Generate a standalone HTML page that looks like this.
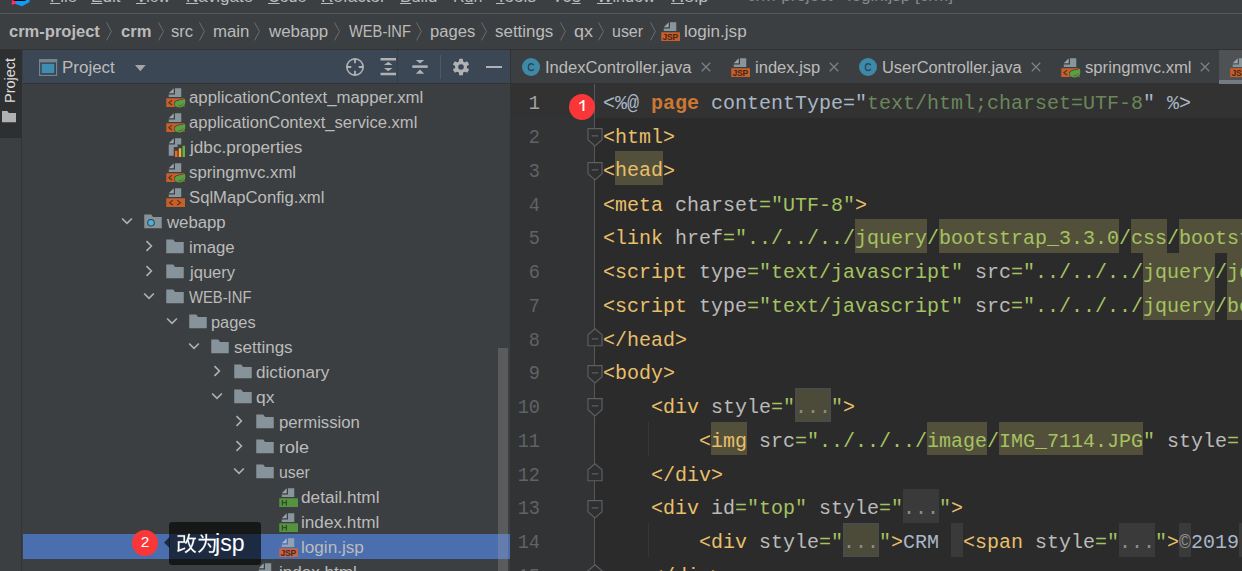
<!DOCTYPE html>
<html lang="en"><head><meta charset="utf-8"><title>crm-project - login.jsp [crm]</title>
<style>
html,body{margin:0;padding:0;background:#3c3f41;overflow:hidden}
body{width:1242px;height:571px;position:relative;font-family:"Liberation Sans",sans-serif;font-size:16px;color:#bbbbbb;line-height:25px}
div,span,svg{position:absolute;white-space:pre}
.t{height:25px;line-height:25px;transform-origin:0 50%}
.b{font-weight:bold}
svg{overflow:visible}
.ic{width:20px;height:20px}
#editor{left:510px;top:83px;width:732px;height:488px;background:#2b2b2b;overflow:hidden}
#gutter{left:0;top:0;width:84.5px;height:488px;background:#313335}
.ln{font-family:"Liberation Mono",monospace;font-size:20px;color:#606366;height:33.77px;line-height:33.77px;text-align:right;width:60px;left:-30px;margin-top:2.9px;transform:scale(.93,1.04);transform-origin:100% 66.3%}
.cl{font-family:"Liberation Mono",monospace;font-size:20px;letter-spacing:-0.002px;color:#a9b7c6;height:33.77px;line-height:33.77px;left:93.1px;margin-top:2.9px}
.cl span{position:static}
.tg{color:#e8bf6a}.an{color:#bababa}.av{color:#a5c261}.kw{color:#cc7832;font-weight:bold}.ds{color:#6a8759}
.hl{background:#52503a;padding:8.3px 0 2.5px}
.fd{color:#8c8c8c;background:#3a3a3a;padding:8.3px 0 2.5px}
.fo{color:#8c8c8c;background:#4c4a38;padding:8.3px 0 2.5px;box-shadow:inset 0 0 0 1.5px #484c4f}
</style></head>
<body>
<svg width="0" height="0" style="left:-10px;top:-10px"><defs>
<symbol id="folder" viewBox="0 0 16 16"><path d="M1 2h5.6L8 4h7v9H1z" fill="#87939a"></path></symbol>
<symbol id="wfolder" viewBox="0 0 16 16"><path d="M1 2h5.6L8 4h7v9H1z" fill="#87939a"></path><circle cx="6.400" cy="8.600" r="3.050" fill="#3c3f41"></circle><circle cx="6.400" cy="8.600" r="2.250" fill="#40b6e0"></circle></symbol>
<symbol id="page" viewBox="0 0 16 16"><path d="M7 1L3 5h4z" fill="#99a4ab"></path><path d="M8 1h5v7H3V6h5z" fill="#89959c"></path></symbol>
<symbol id="leaf" viewBox="0 0 16 16" overflow="visible"><path d="M7.600 13.600C7.600 11.800 9.300 10.900 11.500 10.500 13.300 10.200 14.800 10.100 15.900 9.300 16.400 11 16.500 13 15.600 14.400 14.700 15.800 13.300 16.300 11.800 16.300 9.500 16.300 7.600 15.400 7.600 13.600z" fill="#5c9e46" stroke="#4a3a26" stroke-width=".9" paint-order="stroke"></path><path d="M10.700 15C12.400 15.300 14 14.600 14.700 13.200" fill="none" stroke="#3a6a2c" stroke-width=".7"></path></symbol>
<symbol id="xmls" viewBox="0 0 16 16" overflow="visible"><use href="#page"></use><path d="M1 9h14.800v7H1z" fill="#c5602c"></path><path d="M5.600 10.600L3.100 12.500l2.500 1.900" fill="none" stroke="#5b2c16" stroke-width=".85"></path><use href="#leaf"></use></symbol>
<symbol id="xml" viewBox="0 0 16 16"><use href="#page"></use><path d="M1 9h15v7H1z" fill="#c5602c"></path><path d="M6.200 10.600L3.700 12.500l2.500 1.900M9.800 10.600l2.500 1.900-2.500 1.900" fill="none" stroke="#5b2c16" stroke-width=".85"></path></symbol>
<symbol id="htm" viewBox="0 0 16 16"><use href="#page"></use><path d="M1 9h15v7H1z" fill="#559340"></path><path d="M3.500 10.300v4.400M6.700 10.300v4.400M3.500 12.500h3.200" fill="none" stroke="#2b4c24" stroke-width="1"></path></symbol>
<symbol id="jsp" viewBox="0 0 16 16"><use href="#page"></use><path d="M1 9h15v7H1z" fill="#c5602c"></path><text x="8.200" y="14.900" font-family="Liberation Sans, sans-serif" font-weight="bold" font-size="6.800" letter-spacing="-.2" text-anchor="middle" fill="#4a2414">JSP</text></symbol>
<symbol id="jspsel" viewBox="0 0 16 16"><path d="M7 1L3 5h4z" fill="#a9b5c4"></path><path d="M8 1h5v7H3V6h5z" fill="#93a1b5"></path><path d="M1 9h15v7H1z" fill="#c4664a"></path><text x="8.200" y="14.900" font-family="Liberation Sans, sans-serif" font-weight="bold" font-size="6.800" letter-spacing="-.2" text-anchor="middle" fill="#4a2420">JSP</text></symbol>
<symbol id="prop" viewBox="0 0 16 16"><path d="M7 1L3 5h4z" fill="#99a4ab"></path><path d="M8 1h5v5h-3v2H7v7H3V6h5z" fill="#89959c"></path><path d="M8 11h2v5H8z" fill="#f26522"></path><path d="M11 9h2v7h-2z" fill="#f4af3d"></path><path d="M14 7h2v9h-2z" fill="#62b543"></path></symbol>
<symbol id="cls" viewBox="0 0 16 16"><circle cx="8" cy="8" r="7.2" fill="#3f89a8"></circle><path d="M10.300 9.600c-.4.700-1.100 1.200-2 1.200-1.400 0-2.400-1.100-2.400-2.700s1-2.700 2.400-2.700c.9 0 1.500.4 1.900 1" fill="none" stroke="#27475a" stroke-width="1.100"></path></symbol>
<symbol id="adown" viewBox="0 0 16 16"><path d="M4.100 6L8 9.900l3.900-3.900" fill="none" stroke="#afb1b3" stroke-width="1.300"></path></symbol>
<symbol id="aright" viewBox="0 0 16 16"><path d="M6 4.100L9.900 8 6 11.900" fill="none" stroke="#afb1b3" stroke-width="1.300"></path></symbol>
<symbol id="close" viewBox="0 0 16 16"><path d="M4.600 4.600l6.800 6.800M11.400 4.600l-6.800 6.800" fill="none" stroke="#7f8284" stroke-width="1"></path></symbol>
<symbol id="fstart" viewBox="0 0 16 18.500"><path d="M1 .6h14v11.200L8 17.900 1 11.800z" fill="#2d2f30" stroke="#5c5e60" stroke-width="1.200"></path><path d="M4.700 7.800h6.600" stroke="#5c5e60" stroke-width="1.200"></path></symbol>
<symbol id="fend" viewBox="0 0 16 18.500"><path d="M1 17.900h14V6.800L8 .7 1 6.800z" fill="#2d2f30" stroke="#5c5e60" stroke-width="1.200"></path><path d="M4.700 10.900h6.600" stroke="#5c5e60" stroke-width="1.200"></path></symbol>
</defs></svg>

<div id="menubar" style="left:0;top:0;width:1242px;height:13px;background:#3c3f41;border-bottom:1px solid #555759;overflow:hidden">
<div class="t" style="left: 49.62px; top: -16.3px; color: rgb(187, 187, 187); transform: scaleX(1.0523);"><span style="position:static;text-decoration:underline;text-underline-offset:1px;text-decoration-thickness:1.1px">F</span>ile</div>
<div class="t" style="left: 90.59px; top: -16.3px; color: rgb(187, 187, 187); transform: scaleX(1.0708);"><span style="position:static;text-decoration:underline;text-underline-offset:1px;text-decoration-thickness:1.1px">E</span>dit</div>
<div class="t" style="left: 135.93px; top: -16.3px; color: rgb(187, 187, 187); transform: scaleX(0.9895);"><span style="position:static;text-decoration:underline;text-underline-offset:1px;text-decoration-thickness:1.1px">V</span>iew</div>
<div class="t" style="left: 185.6px; top: -16.3px; color: rgb(187, 187, 187); transform: scaleX(1.0633);"><span style="position:static;text-decoration:underline;text-underline-offset:1px;text-decoration-thickness:1.1px">N</span>avigate</div>
<div class="t" style="left: 268.18px; top: -16.3px; color: rgb(187, 187, 187); transform: scaleX(1.0074);"><span style="position:static;text-decoration:underline;text-underline-offset:1px;text-decoration-thickness:1.1px">C</span>ode</div>
<div class="t" style="left: 320.6px; top: -16.3px; color: rgb(187, 187, 187); transform: scaleX(1.0698);"><span style="position:static;text-decoration:underline;text-underline-offset:1px;text-decoration-thickness:1.1px">R</span>efactor</div>
<div class="t" style="left: 399.62px; top: -16.3px; color: rgb(187, 187, 187); transform: scaleX(1.0531);"><span style="position:static;text-decoration:underline;text-underline-offset:1px;text-decoration-thickness:1.1px">B</span>uild</div>
<div class="t" style="left: 452.69px; top: -16.3px; color: rgb(187, 187, 187); transform: scaleX(0.9997);">R<span style="position:static;text-decoration:underline;text-underline-offset:1px;text-decoration-thickness:1.1px">u</span>n</div>
<div class="t" style="left: 495.62px; top: -16.3px; color: rgb(187, 187, 187); transform: scaleX(1.0708);"><span style="position:static;text-decoration:underline;text-underline-offset:1px;text-decoration-thickness:1.1px">T</span>ools</div>
<div class="t" style="left: 552.94px; top: -16.3px; color: rgb(187, 187, 187); transform: scaleX(0.8411);">VC<span style="position:static;text-decoration:underline;text-underline-offset:1px;text-decoration-thickness:1.1px">S</span></div>
<div class="t" style="left: 596.93px; top: -16.3px; color: rgb(187, 187, 187); transform: scaleX(1.0198);"><span style="position:static;text-decoration:underline;text-underline-offset:1px;text-decoration-thickness:1.1px">W</span>indow</div>
<div class="t" style="left: 670.51px; top: -16.3px; color: rgb(187, 187, 187); transform: scaleX(1.1319);"><span style="position:static;text-decoration:underline;text-underline-offset:1px;text-decoration-thickness:1.1px">H</span>elp</div>
<div class="t" style="left: 747.27px; top: -16.7px; color: rgb(133, 135, 138); transform: scaleX(1.0675);">crm-project - login.jsp [crm]</div>
<svg style="left:8px;top:-6px;width:24px;height:13px" viewBox="8 -6 24 13"><path d="M11.500 4.800L13 -4l9 6.500z" fill="#fe2d6b"></path><path d="M15.500 1.500L31 -4l-1.800 6.300L22 6.200 16.200 4.300z" fill="#0f9bfa"></path><rect x="13.700" y="-6" width="12.100" height="7" fill="#000"></rect></svg>
</div>
<div id="navbar" style="left:0;top:14px;width:1242px;height:35px;background:#3c3f41;border-bottom:1px solid #323232">
<div class="t b" style="left: 9.36px; top: 4.5px; transform: scaleX(1.032);">crm-project</div>
<div class="t b" style="left: 120.6px; top: 4.5px; transform: scaleX(1.0363);">crm</div>
<div class="t" style="left: 170.79px; top: 4.5px; transform: scaleX(1.0386);">src</div>
<div class="t" style="left: 212.63px; top: 4.5px; transform: scaleX(1.0511);">main</div>
<div class="t" style="left: 268.52px; top: 4.5px; transform: scaleX(1.056);">webapp</div>
<div class="t" style="left: 348.69px; top: 4.5px; transform: scaleX(0.9164);">WEB-INF</div>
<div class="t" style="left: 429.68px; top: 4.5px; transform: scaleX(1.0361);">pages</div>
<div class="t" style="left: 495.28px; top: 4.5px; transform: scaleX(1.0579);">settings</div>
<div class="t" style="left: 573.75px; top: 4.5px; transform: scaleX(1.1206);">qx</div>
<div class="t" style="left: 612.21px; top: 4.5px; transform: scaleX(0.9976);">user</div>
<svg style="left:106.25px;top:8.1px;width:6px;height:19px" viewBox="0 0 6 19"><path d="M.5 .4L5.400 9.400.5 18.400" fill="none" stroke="#6b6e70" stroke-width="1"></path></svg>
<svg style="left:158px;top:8.1px;width:6px;height:19px" viewBox="0 0 6 19"><path d="M.5 .4L5.400 9.400.5 18.400" fill="none" stroke="#6b6e70" stroke-width="1"></path></svg>
<svg style="left:198.75px;top:8.1px;width:6px;height:19px" viewBox="0 0 6 19"><path d="M.5 .4L5.400 9.400.5 18.400" fill="none" stroke="#6b6e70" stroke-width="1"></path></svg>
<svg style="left:253.75px;top:8.1px;width:6px;height:19px" viewBox="0 0 6 19"><path d="M.5 .4L5.400 9.400.5 18.400" fill="none" stroke="#6b6e70" stroke-width="1"></path></svg>
<svg style="left:333.75px;top:8.1px;width:6px;height:19px" viewBox="0 0 6 19"><path d="M.5 .4L5.400 9.400.5 18.400" fill="none" stroke="#6b6e70" stroke-width="1"></path></svg>
<svg style="left:416.25px;top:8.1px;width:6px;height:19px" viewBox="0 0 6 19"><path d="M.5 .4L5.400 9.400.5 18.400" fill="none" stroke="#6b6e70" stroke-width="1"></path></svg>
<svg style="left:481.25px;top:8.1px;width:6px;height:19px" viewBox="0 0 6 19"><path d="M.5 .4L5.400 9.400.5 18.400" fill="none" stroke="#6b6e70" stroke-width="1"></path></svg>
<svg style="left:560px;top:8.1px;width:6px;height:19px" viewBox="0 0 6 19"><path d="M.5 .4L5.400 9.400.5 18.400" fill="none" stroke="#6b6e70" stroke-width="1"></path></svg>
<svg style="left:598px;top:8.1px;width:6px;height:19px" viewBox="0 0 6 19"><path d="M.5 .4L5.400 9.400.5 18.400" fill="none" stroke="#6b6e70" stroke-width="1"></path></svg>
<svg style="left:650px;top:8.1px;width:6px;height:19px" viewBox="0 0 6 19"><path d="M.5 .4L5.400 9.400.5 18.400" fill="none" stroke="#6b6e70" stroke-width="1"></path></svg>
<svg class="ic" style="left:660.00px;top:6.75px"><use href="#jsp"></use></svg>
<div class="t" style="left: 683.85px; top: 4.5px; transform: scaleX(1.0667);">login.jsp</div>
</div>
<div id="stripe" style="left:0;top:50px;width:21px;height:521px;background:#3c3f41;border-right:1px solid #323537">
<div style="left:0;top:0;width:21.5px;height:87.5px;background:#2d2f30"></div>
<div style="left:0;top:0;width:0;height:0"><div class="t" id="vproj" style="left: -2.9px; top: 53px; transform: rotate(-90deg) scaleX(0.9335); transform-origin: 0px 0px; color: rgb(220, 220, 220); font-size: 15.5px; height: 25px; line-height: 25px;">Project</div></div>
<svg style="left:2.3px;top:60.6px;width:14px;height:11.2px" viewBox="0 0 14 11" preserveAspectRatio="none"><path d="M0 0h5.300L6.800 2H14v9H0z" fill="#afb1b3"></path></svg>
</div>
<div id="projhdr" style="left:23px;top:50px;width:487px;height:33px;background:#3b4754">
<div style="left:374.2px;top:0;width:1.2px;height:33px;background:#353f4b"></div>
<svg style="left:15.9px;top:9px;width:18.2px;height:17px" viewBox="0 0 18.200 17"><rect x=".6" y=".6" width="17" height="15.800" fill="#39434f" stroke="#77838d" stroke-width="1.200"></rect><rect x="0" y="0" width="18.200" height="3.400" fill="#77838d"></rect><rect x="2.700" y="4.800" width="12.600" height="9.300" fill="#3f8db0"></rect></svg>
<div class="t" style="left: 39.36px; top: 5px; transform: scaleX(1.0596);">Project</div>
<svg style="left:111.8px;top:15.1px;width:10.7px;height:6.2px" viewBox="0 0 10.700 6.200"><path d="M0 0h10.700L5.350 6.200z" fill="#a4a7a9"></path></svg>
<svg style="left:322px;top:6.8px;width:20px;height:20px" viewBox="0 0 20 20"><circle cx="10" cy="10" r="8.150" fill="none" stroke="#afb1b3" stroke-width="1.600"></circle><path d="M10 1.500v4.800M10 13.700v4.800M1.500 10h4.800M13.700 10h4.800" stroke="#afb1b3" stroke-width="1.800"></path></svg>
<svg style="left:357px;top:8.4px;width:17px;height:18px" viewBox="0 0 17 18"><path d="M.5 0h15.500v2.600H.5zM.5 14.700h15.500v2.600H.5z" fill="#afb1b3"></path><path d="M8.250 3.800l4.300 3.300H3.950zM8.250 13.200l4.300-3.300H3.950z" fill="#afb1b3"></path></svg>
<svg style="left:389.3px;top:9px;width:16px;height:16px" viewBox="0 0 16 16"><path d="M.3 6.300h15.400v2.600H.3z" fill="#afb1b3"></path><path d="M8 4.600L3.800 1h8.400zM8 10.600L3.800 14.800h8.400z" fill="#afb1b3"></path></svg>
<div style="left:417px;top:5px;width:1px;height:24px;background:#555759"></div>
<svg style="left:429.2px;top:8px;width:18px;height:18px" viewBox="-9 -9 18 18"><g fill="#afb1b3"><circle cx="0" cy="0" r="6"></circle><rect x="-2" y="-8.300" width="4" height="4" rx=".6" transform="rotate(0)"></rect><rect x="-2" y="-8.300" width="4" height="4" rx=".6" transform="rotate(60)"></rect><rect x="-2" y="-8.300" width="4" height="4" rx=".6" transform="rotate(120)"></rect><rect x="-2" y="-8.300" width="4" height="4" rx=".6" transform="rotate(180)"></rect><rect x="-2" y="-8.300" width="4" height="4" rx=".6" transform="rotate(240)"></rect><rect x="-2" y="-8.300" width="4" height="4" rx=".6" transform="rotate(300)"></rect></g><circle cx="0" cy="0" r="2.800" fill="#3b4754"></circle></svg>
<div style="left:463.2px;top:15.7px;width:15.5px;height:2.4px;background:#afb1b3"></div>
</div>
<div id="tree" style="left:23px;top:83px;width:487px;height:488px;background:#3c3f41;overflow:hidden">
<div style="left:0;top:451px;width:487px;height:25px;background:#4b6eaf"></div>
<svg class="ic" style="left:142.00px;top:3.75px"><use href="#xmls"></use></svg>
<div class="t" style="left: 165.79px; top: 1.7px; color: rgb(187, 187, 187); transform: scaleX(1.0497);">applicationContext_mapper.xml</div>
<svg class="ic" style="left:142.00px;top:28.75px"><use href="#xmls"></use></svg>
<div class="t" style="left: 165.8px; top: 26.7px; color: rgb(187, 187, 187); transform: scaleX(1.0352);">applicationContext_service.xml</div>
<svg class="ic" style="left:142.00px;top:53.75px"><use href="#prop"></use></svg>
<div class="t" style="left: 166.92px; top: 51.7px; color: rgb(187, 187, 187); transform: scaleX(1.0714);">jdbc.properties</div>
<svg class="ic" style="left:142.00px;top:78.75px"><use href="#xmls"></use></svg>
<div class="t" style="left: 166.03px; top: 76.7px; color: rgb(187, 187, 187); transform: scaleX(1.0475);">springmvc.xml</div>
<svg class="ic" style="left:142.00px;top:103.75px"><use href="#xml"></use></svg>
<div class="t" style="left: 165.74px; top: 101.7px; color: rgb(187, 187, 187); transform: scaleX(1.0427);">SqlMapConfig.xml</div>
<svg class="ic" style="left:93.85px;top:128.25px"><use href="#adown"></use></svg>
<svg class="ic" style="left:119.60px;top:128.75px"><use href="#wfolder"></use></svg>
<div class="t" style="left: 143.52px; top: 126.7px; color: rgb(187, 187, 187); transform: scaleX(1.047);">webapp</div>
<svg class="ic" style="left:116.25px;top:153.25px"><use href="#aright"></use></svg>
<svg class="ic" style="left:142.00px;top:153.75px"><use href="#folder"></use></svg>
<div class="t" style="left: 165.88px; top: 151.7px; color: rgb(187, 187, 187); transform: scaleX(1.0467);">image</div>
<svg class="ic" style="left:116.25px;top:178.25px"><use href="#aright"></use></svg>
<svg class="ic" style="left:142.00px;top:178.75px"><use href="#folder"></use></svg>
<div class="t" style="left: 166.9px; top: 176.7px; color: rgb(187, 187, 187); transform: scaleX(1.0356);">jquery</div>
<svg class="ic" style="left:116.25px;top:203.25px"><use href="#adown"></use></svg>
<svg class="ic" style="left:142.00px;top:203.75px"><use href="#folder"></use></svg>
<div class="t" style="left: 166.44px; top: 201.7px; color: rgb(187, 187, 187); transform: scaleX(0.9239);">WEB-INF</div>
<svg class="ic" style="left:138.75px;top:228.25px"><use href="#adown"></use></svg>
<svg class="ic" style="left:164.50px;top:228.75px"><use href="#folder"></use></svg>
<div class="t" style="left: 187.94px; top: 226.7px; color: rgb(187, 187, 187); transform: scaleX(1.0242);">pages</div>
<svg class="ic" style="left:161.25px;top:253.25px"><use href="#adown"></use></svg>
<svg class="ic" style="left:187.00px;top:253.75px"><use href="#folder"></use></svg>
<div class="t" style="left: 211.03px; top: 251.7px; color: rgb(187, 187, 187); transform: scaleX(1.0625);">settings</div>
<svg class="ic" style="left:183.75px;top:278.25px"><use href="#aright"></use></svg>
<svg class="ic" style="left:209.50px;top:278.75px"><use href="#folder"></use></svg>
<div class="t" style="left: 233.03px; top: 276.7px; color: rgb(187, 187, 187); transform: scaleX(1.0696);">dictionary</div>
<svg class="ic" style="left:183.75px;top:303.25px"><use href="#adown"></use></svg>
<svg class="ic" style="left:209.50px;top:303.75px"><use href="#folder"></use></svg>
<div class="t" style="left: 233.02px; top: 301.7px; color: rgb(187, 187, 187); transform: scaleX(1.0895);">qx</div>
<svg class="ic" style="left:206.25px;top:328.25px"><use href="#aright"></use></svg>
<svg class="ic" style="left:232.00px;top:328.75px"><use href="#folder"></use></svg>
<div class="t" style="left: 255.92px; top: 326.7px; color: rgb(187, 187, 187); transform: scaleX(1.046);">permission</div>
<svg class="ic" style="left:206.25px;top:353.25px"><use href="#aright"></use></svg>
<svg class="ic" style="left:232.00px;top:353.75px"><use href="#folder"></use></svg>
<div class="t" style="left: 255.81px; top: 351.7px; color: rgb(187, 187, 187); transform: scaleX(1.1239);">role</div>
<svg class="ic" style="left:206.25px;top:378.25px"><use href="#adown"></use></svg>
<svg class="ic" style="left:232.00px;top:378.75px"><use href="#folder"></use></svg>
<div class="t" style="left: 255.97px; top: 376.7px; color: rgb(187, 187, 187); transform: scaleX(0.9893);">user</div>
<svg class="ic" style="left:254.90px;top:403.75px"><use href="#htm"></use></svg>
<div class="t" style="left: 278.28px; top: 401.7px; color: rgb(187, 187, 187); transform: scaleX(1.0761);">detail.html</div>
<svg class="ic" style="left:254.90px;top:428.75px"><use href="#htm"></use></svg>
<div class="t" style="left: 277.85px; top: 426.7px; color: rgb(187, 187, 187); transform: scaleX(1.0737);">index.html</div>
<svg class="ic" style="left:254.90px;top:453.75px"><use href="#jspsel"></use></svg>
<div class="t" style="left: 277.85px; top: 451.7px; color: rgb(187, 187, 187); transform: scaleX(1.0711);">login.jsp</div>
<svg class="ic" style="left:231.90px;top:479.25px"><use href="#htm"></use></svg>
<div class="t" style="left: 255.86px; top: 476.7px; color: rgb(187, 187, 187); transform: scaleX(1.0681);">index.html</div>
<div style="left:475px;top:265px;width:10px;height:240px;background:rgba(166,166,166,.28)"></div>
<div style="left:108.9px;top:446.7px;width:26.2px;height:26.2px;border-radius:13.1px;background:#f93738"></div>
<div class="t" style="left:108.9px;top:446px;width:26.2px;text-align:center;color:#fff;font-size:15.4px">2</div>
<div style="left:146.3px;top:439.2px;width:91.5px;height:42.5px;border-radius:3px;background:rgba(0,0,0,.62)"></div>
<svg style="left:140.7px;top:454.2px;width:5.6px;height:11px" viewBox="0 0 5.600 11"><path d="M5.600 0v11L0 5.500z" fill="rgba(0,0,0,.62)"></path></svg>
<svg role="img" aria-label="改为" style="left:153.39px;top:449.96px;width:41.8px;height:20.9px" viewBox="0 0 2000 1000"><title>改为</title><g fill="#ffffff" stroke="#ffffff" stroke-width="10"><path d="M602 295H808C787 426 755 537 706 629C657 535 622 425 598 306ZM76 110V184H357V396H89V777C89 814 73 827 58 834C71 853 83 890 88 912C111 893 148 874 439 763C436 746 431 714 430 692L165 787V470H429L424 476C440 488 470 517 482 530C508 495 532 455 553 411C581 518 616 616 662 699C602 783 522 848 416 896C431 912 453 946 461 964C563 913 643 849 706 769C761 848 830 912 915 955C927 935 950 907 968 892C879 851 808 786 751 703C817 594 859 460 886 295H952V225H626C643 170 658 112 670 53L596 40C565 204 510 363 431 467V110Z"></path><path transform="translate(1000 0)" d="M162 96C202 143 247 207 267 248L335 215C314 174 267 112 226 68ZM499 509C550 570 609 654 635 707L701 671C674 619 613 538 561 479ZM411 42V160C411 198 410 238 407 281H82V356H399C374 534 295 735 55 891C73 903 101 929 114 946C370 776 452 552 476 356H821C807 696 791 830 761 861C750 873 739 876 717 875C693 875 630 875 562 869C577 891 587 924 588 947C650 950 713 952 748 949C785 945 808 937 831 908C870 862 884 721 900 320C900 308 901 281 901 281H484C486 239 487 198 487 161V42Z"></path></g></svg>
<div class="t" style="left: 192.36px; top: 448.4px; color: rgb(255, 255, 255); font-size: 23.5px; transform: scaleX(0.982);">jsp</div>
</div>
<div id="tabs" style="left:510px;top:50px;width:732px;height:33px;background:#3c3f41;overflow:hidden">
<div style="left:709px;top:0;width:40px;height:33px;background:#4e5254"></div>
<div style="left:709px;top:29.5px;width:40px;height:3.5px;background:#7a7e80"></div>
<svg class="ic" style="left:11.00px;top:7.00px"><use href="#cls"></use></svg>
<div class="t" style="left: 35.47px; top: 5px; transform: scaleX(1.0361);">IndexController.java</div>
<svg class="ic" style="left:186.30px;top:6.80px"><use href="#close"></use></svg>
<svg class="ic" style="left:220.00px;top:7.00px"><use href="#jsp"></use></svg>
<div class="t" style="left: 244.89px; top: 5px; transform: scaleX(1.034);">index.jsp</div>
<svg class="ic" style="left:314.30px;top:6.80px"><use href="#close"></use></svg>
<svg class="ic" style="left:348.25px;top:7.00px"><use href="#cls"></use></svg>
<div class="t" style="left: 372.48px; top: 5px; transform: scaleX(1.0254);">UserController.java</div>
<svg class="ic" style="left:516.30px;top:6.80px"><use href="#close"></use></svg>
<svg class="ic" style="left:550.00px;top:7.00px"><use href="#xmls"></use></svg>
<div class="t" style="left: 575.29px; top: 5px; transform: scaleX(1.0425);">springmvc.xml</div>
<svg class="ic" style="left:685.30px;top:6.80px"><use href="#close"></use></svg>
<svg class="ic" style="left:719.00px;top:7.00px"><use href="#jsp"></use></svg>
</div>
<div id="editor">
<div id="gutter"></div>
<div style="left:0;top:1.3px;width:732px;height:33.57px;background:#323232"></div>
<div style="left:83.9px;top:0;width:1.2px;height:488px;background:#555759"></div>
<div style="left:138px;top:339px;width:1px;height:33.77px;background:#373737"></div>
<div style="left:138px;top:440.31px;width:1px;height:33.77px;background:#373737"></div>
<div class="ln" style="top:1.3px;color:#a4a3a3">1</div>
<div class="ln" style="top:35.07px">2</div>
<div class="ln" style="top:68.84px">3</div>
<div class="ln" style="top:102.61px">4</div>
<div class="ln" style="top:136.38px">5</div>
<div class="ln" style="top:170.15px">6</div>
<div class="ln" style="top:203.92px">7</div>
<div class="ln" style="top:237.69px">8</div>
<div class="ln" style="top:271.46px">9</div>
<div class="ln" style="top:305.23px">10</div>
<div class="ln" style="top:339px">11</div>
<div class="ln" style="top:372.77px">12</div>
<div class="ln" style="top:406.54px">13</div>
<div class="ln" style="top:440.31px">14</div>
<div class="ln" style="top:474.08px">15</div>
<svg style="left:76.6px;top:45.255px;width:16px;height:18.5px"><use href="#fstart"></use></svg>
<svg style="left:76.6px;top:79.025px;width:16px;height:18.5px"><use href="#fstart"></use></svg>
<svg style="left:76.6px;top:244.675px;width:16px;height:18.5px"><use href="#fend"></use></svg>
<svg style="left:76.6px;top:281.645px;width:16px;height:18.5px"><use href="#fstart"></use></svg>
<svg style="left:76.6px;top:315.415px;width:16px;height:18.5px"><use href="#fstart"></use></svg>
<svg style="left:76.6px;top:379.755px;width:16px;height:18.5px"><use href="#fend"></use></svg>
<svg style="left:76.6px;top:416.725px;width:16px;height:18.5px"><use href="#fstart"></use></svg>
<svg style="left:76.6px;top:481.065px;width:16px;height:18.5px"><use href="#fend"></use></svg>
<div class="cl" style="top:1.3px">&lt;%@ <span class="kw">page</span> contentType="<span class="ds">text/html;charset=UTF-8</span>" %&gt;</div>
<div class="cl" style="top:35.07px"><span class="tg">&lt;html&gt;</span></div>
<div class="cl" style="top:68.84px"><span class="tg">&lt;</span><span class="tg hl">head</span><span class="tg">&gt;</span></div>
<div class="cl" style="top:102.61px"><span class="tg">&lt;meta</span> <span class="an">charset</span><span class="av">="UTF-8"</span><span class="tg">&gt;</span></div>
<div class="cl" style="top:136.38px"><span class="tg">&lt;link</span> <span class="an">href</span><span class="av">="../../../</span><span class="av hl">jquery</span><span class="av">/</span><span class="av hl">bootstrap_3.3.0</span><span class="av">/</span><span class="av hl">css</span><span class="av">/</span><span class="av hl">bootstrap.min.css</span></div>
<div class="cl" style="top:170.15px"><span class="tg">&lt;script</span> <span class="an">type</span><span class="av">="text/javascript"</span> <span class="an">src</span><span class="av">="../../../</span><span class="av hl">jquery</span><span class="av">/</span><span class="av hl">jquery-1.11.1-min.js</span></div>
<div class="cl" style="top:203.92px"><span class="tg">&lt;script</span> <span class="an">type</span><span class="av">="text/javascript"</span> <span class="an">src</span><span class="av">="../../../</span><span class="av hl">jquery</span><span class="av">/</span><span class="av hl">bootstrap_3.3.0</span></div>
<div class="cl" style="top:237.69px"><span class="tg">&lt;/head&gt;</span></div>
<div class="cl" style="top:271.46px"><span class="tg">&lt;body&gt;</span></div>
<div class="cl" style="top:305.23px">    <span class="tg">&lt;div</span> <span class="an">style</span><span class="av">="</span><span class="fo">...</span><span class="av">"</span><span class="tg">&gt;</span></div>
<div class="cl" style="top:339px">        <span class="tg">&lt;</span><span class="tg hl">img</span> <span class="an">src</span><span class="av">="../../../</span><span class="av hl">image</span><span class="av">/</span><span class="av hl">IMG_7114.JPG</span><span class="av">"</span> <span class="an">style</span><span class="av">=</span></div>
<div class="cl" style="top:372.77px">    <span class="tg">&lt;/div&gt;</span></div>
<div class="cl" style="top:406.54px">    <span class="tg">&lt;div</span> <span class="an">id</span><span class="av">="top"</span> <span class="an">style</span><span class="av">="</span><span class="fd">...</span><span class="av">"</span><span class="tg">&gt;</span></div>
<div class="cl" style="top:440.31px">        <span class="tg">&lt;div</span> <span class="an">style</span><span class="av">="</span><span class="fo">...</span><span class="av">"</span><span class="tg">&gt;</span>CRM <span class="fd"> </span><span class="tg">&lt;span</span> <span class="an">style</span><span class="av">="</span><span class="fd">...</span><span class="av">"</span><span class="tg">&gt;</span><span class="fd">©</span>2019<span class="fd"> </span>xxx</div>
<div class="cl" style="top:474.08px">    <span class="tg">&lt;/div&gt;</span></div>
<div style="left:58.7px;top:10.8px;width:26.4px;height:26.4px;border-radius:13.2px;background:#f93738"></div>
<svg role="img" aria-label="1" style="left:68.8px;top:17px;width:5.4px;height:10.9px" viewBox="0 0 5.4 10.9"><title>1</title><path d="M5.4 0V10.9H3.5V2.6C2.6 3.4 1.5 4 .2 4.4V2.8C1.8 2.2 3.1 1.2 3.9 0Z" fill="#fff"></path></svg>
</div>
<div style="left:23px;top:83px;width:1219px;height:1px;background:#323232"></div>
<div style="left:510px;top:50px;width:1px;height:34px;background:#323232"></div>
<div style="left:1219px;top:79.8px;width:23px;height:4.1px;background:#757b80"></div>
</body></html>
